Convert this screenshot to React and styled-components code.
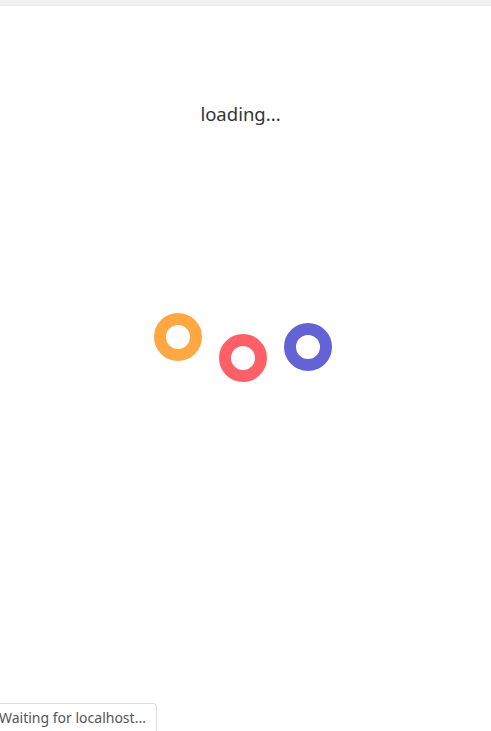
import React from "react";
import styled, { createGlobalStyle } from "styled-components";

const GlobalStyle = createGlobalStyle`
  html, body {
    margin: 0;
    padding: 0;
    background: #ffffff;
  }
  body {
    font-family: "Noto Sans", "Open Sans", sans-serif;
  }
`;

const dots = [
  { color: "#ffa843", offset: 0 },
  { color: "#ff6067", offset: 21 },
  { color: "#6363d5", offset: 10 },
];

const App = () => {
  return (
    <Page>
      <GlobalStyle />
      <TopBar />
      <Title>loading...</Title>
      <Loader>
        {dots.map((d, i) => (
          <Ring key={i} color={d.color} offset={d.offset} />
        ))}
      </Loader>
      <Status>Waiting for localhost...</Status>
    </Page>
  );
};

export default App;

const Page = styled.div`
  position: relative;
  height: 731px;
  overflow: hidden;
  display: flex;
  flex-direction: column;
  align-items: center;
`;

const TopBar = styled.div`
  align-self: stretch;
  height: 5px;
  background: #f2f2f2;
  border-bottom: 1px solid #ececec;
`;

const Title = styled.div`
  margin-top: 96px;
  height: 24px;
  line-height: 24px;
  font-size: 18.5px;
  color: #333333;
  padding-right: 10px;
`;

const Loader = styled.div`
  margin-top: 187px;
  display: flex;
  align-items: flex-start;
  gap: 17px;
  padding-right: 5px;
`;

const Ring = styled.div`
  width: 48px;
  height: 48px;
  box-sizing: border-box;
  border-radius: 50%;
  border: 12.5px solid ${(p) => p.color};
  margin-top: ${(p) => p.offset}px;
`;

const Status = styled.div`
  position: absolute;
  left: -2px;
  bottom: 0;
  height: 27px;
  line-height: 27px;
  padding: 0 10px 0 0;
  font-size: 14px;
  color: #555555;
  background: #ffffff;
  border: 1px solid #dedede;
  border-bottom: none;
  border-top-right-radius: 4px;
`;
